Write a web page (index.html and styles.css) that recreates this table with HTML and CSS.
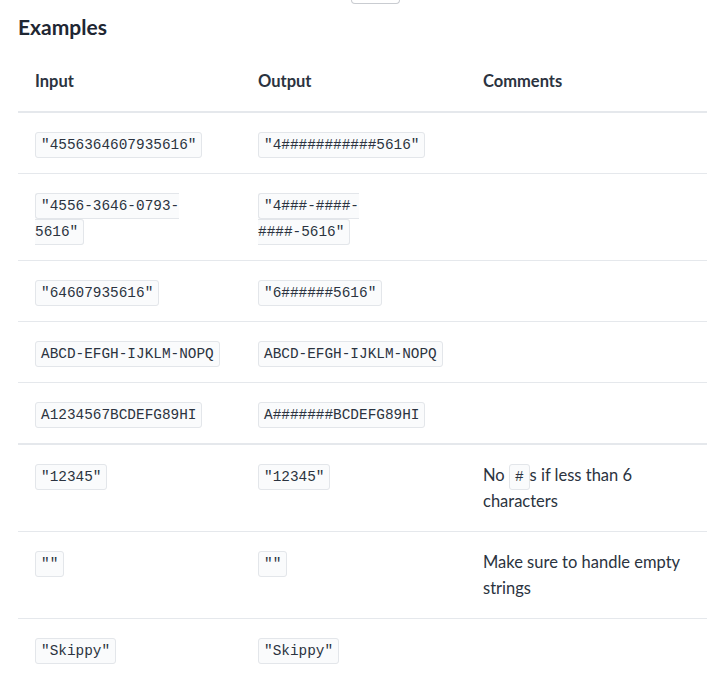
FILE: index.html
```html
<!DOCTYPE html>
<html lang="en">
<head>
  <meta charset="UTF-8" />
  <title>Examples</title>
  <link rel="stylesheet" href="styles.css">
</head>
<body>
<div class="page">
  <!-- bottom of a button cut off at the top -->
  <div class="cut-button"></div>

  <h2 class="title">Examples</h2>

  <table class="examples">
    <thead>
      <tr>
        <th>Input</th>
        <th>Output</th>
        <th>Comments</th>
      </tr>
    </thead>
    <tbody>
      <tr>
        <td><code>"4556364607935616"</code></td>
        <td><code>"4###########5616"</code></td>
        <td></td>
      </tr>
      <tr>
        <td><code>"4556-3646-0793-5616"</code></td>
        <td><code>"4###-####-####-5616"</code></td>
        <td></td>
      </tr>
      <tr>
        <td><code>"64607935616"</code></td>
        <td><code>"6######5616"</code></td>
        <td></td>
      </tr>
      <tr>
        <td><code>ABCD-EFGH-IJKLM-NOPQ</code></td>
        <td><code>ABCD-EFGH-IJKLM-NOPQ</code></td>
        <td></td>
      </tr>
      <tr class="split">
        <td><code>A1234567BCDEFG89HI</code></td>
        <td><code>A#######BCDEFG89HI</code></td>
        <td></td>
      </tr>
      <tr>
        <td><code>"12345"</code></td>
        <td><code>"12345"</code></td>
        <td>No <code>#</code>s if less than 6 characters</td>
      </tr>
      <tr>
        <td><code>""</code></td>
        <td><code>""</code></td>
        <td>Make sure to handle empty strings</td>
      </tr>
      <tr class="last">
        <td><code>"Skippy"</code></td>
        <td><code>"Skippy"</code></td>
        <td></td>
      </tr>
    </tbody>
  </table>
</div>
</body>
</html>
```

FILE: styles.css
```css
* {
  margin: 0;
  padding: 0;
  box-sizing: border-box;
}

body {
  font-family: Lato, "Liberation Sans", sans-serif;
  font-size: 16.5px;
  line-height: 26px;
  color: #2b3340;
  background: #fff;
}

.page {
  padding-left: 18px;
}

.cut-button {
  width: 49px;
  height: 4px;
  margin-left: 333px;
  border: 1px solid #c9ccd1;
  border-top: none;
  border-radius: 0 0 8px 8px;
}

.title {
  font-size: 21px;
  font-weight: 700;
  line-height: 30px;
  color: #1f2733;
  margin-top: 8px;
}

.examples {
  width: 689px;
  margin-top: 9px;
  border-collapse: collapse;
  table-layout: fixed;
}

.examples th,
.examples td {
  text-align: left;
  vertical-align: top;
  padding: 17px;
}

.examples th:nth-child(1),
.examples td:nth-child(1) { width: 223px; }

.examples th:nth-child(2),
.examples td:nth-child(2) { width: 225px; }

.examples th {
  font-weight: 700;
  border-bottom: 2px solid #e5e8ec;
}

.examples td {
  border-bottom: 1px solid #e5e8ec;
}

.examples tr.split td {
  border-bottom-width: 2px;
}

.examples tr.last td {
  border-bottom: none;
}

code {
  font-family: "Liberation Mono", monospace;
  font-size: 14.4px;
  line-height: 16px;
  color: #2b3340;
  background: #fafbfc;
  border: 1px solid #e3e6ea;
  border-radius: 3px;
  padding: 4px 5px;
}
```
